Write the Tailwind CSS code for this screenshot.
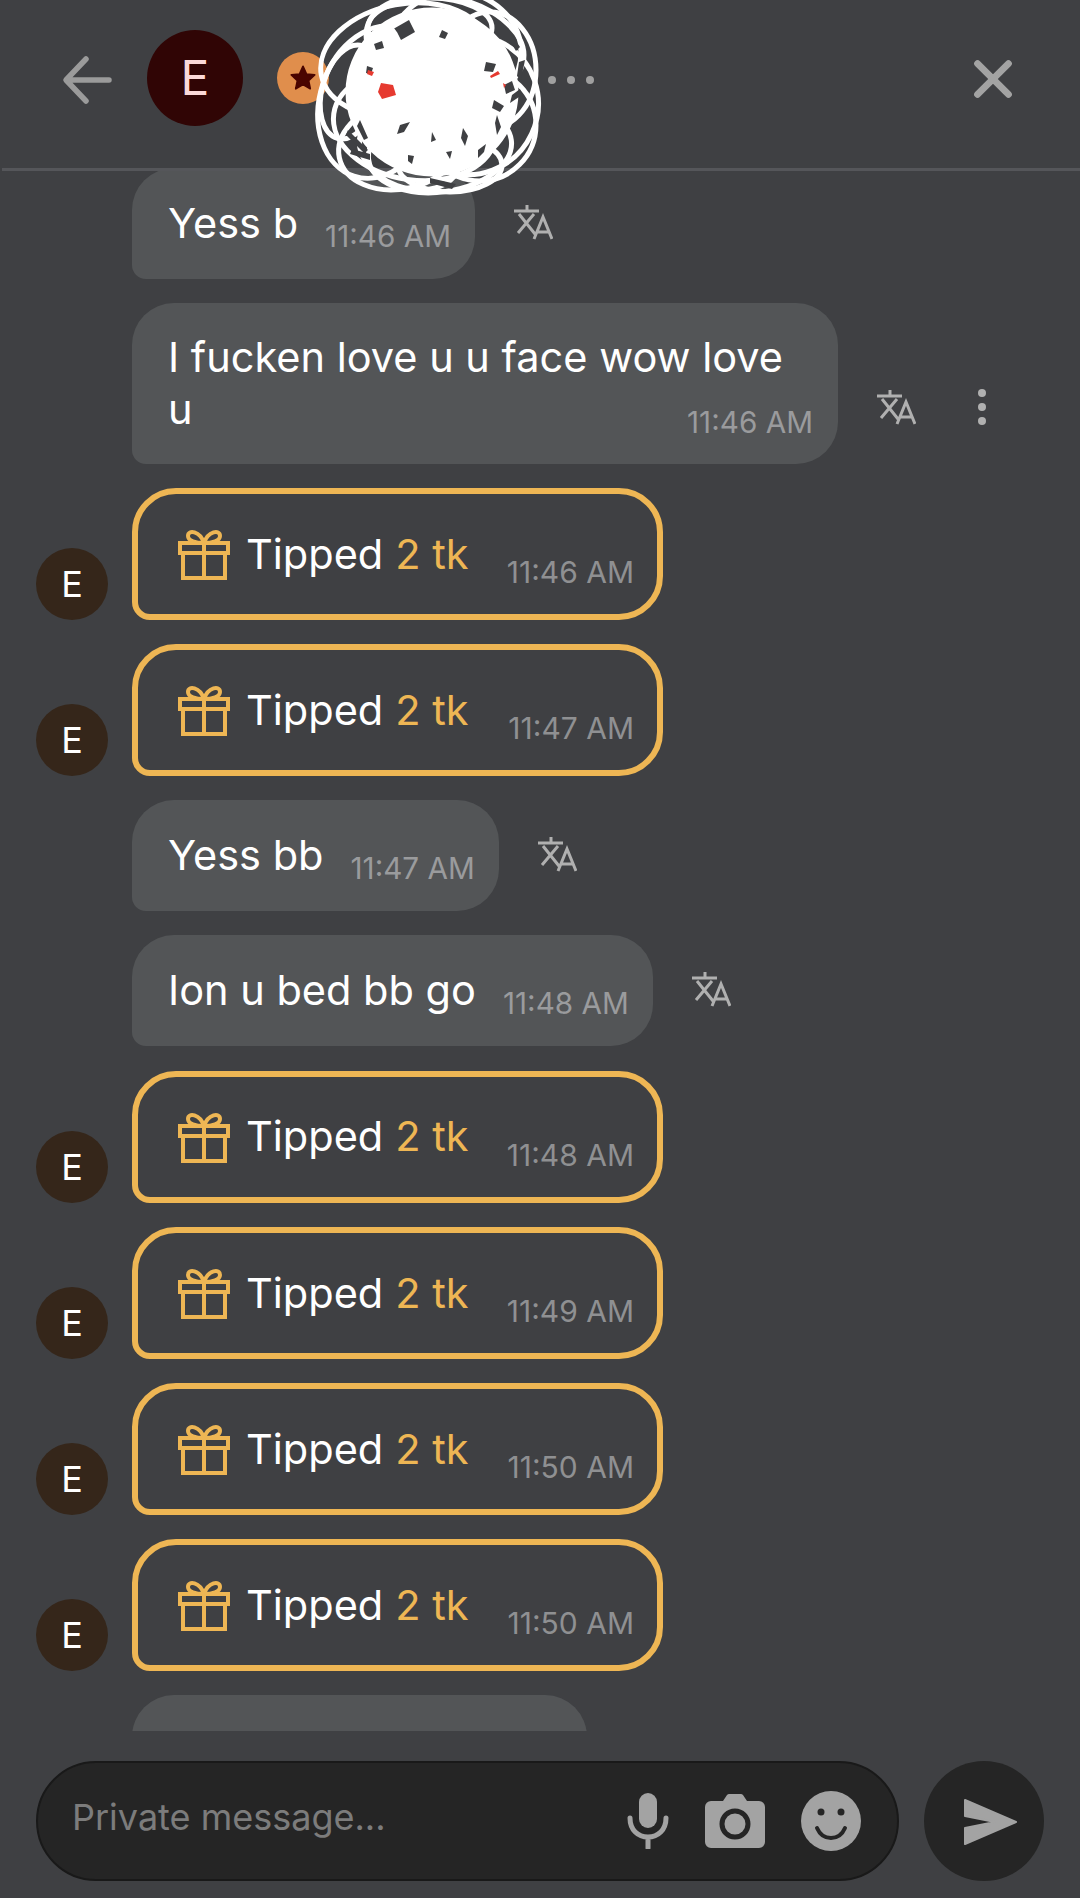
<!DOCTYPE html>
<html lang="en">
<head>
<meta charset="utf-8">
<script src="https://cdn.jsdelivr.net/npm/@tailwindcss/browser@4"></script>
<title>Chat</title>
</head>
<body class="bg-[#3f4043]">
<div class="relative w-[1080px] h-[1898px] overflow-hidden bg-[#3f4043] font-['Inter','Noto_Sans',sans-serif] flex flex-col">

  <!-- header -->
  <header class="h-[171px] shrink-0 ml-[2px] border-b-[3px] border-[#55565a] flex items-start pt-[30px]">
    <svg class="ml-[60px] mt-[25px] w-[50px] h-[50px] shrink-0" viewBox="0 0 50 50" fill="none" stroke="#9b9b9b" stroke-width="5.500" stroke-linecap="round" stroke-linejoin="round"><path d="M47 25H5M24 4 4 25l20 21"/></svg>
    <div class="ml-[35px] w-[96px] h-[96px] rounded-full bg-[#300505] text-[#fbd9d9] text-[48px] font-normal flex items-center justify-center shrink-0">E</div>
    <div class="ml-[34px] mt-[22px] w-[52px] h-[52px] rounded-full bg-[#e08e4c] flex items-center justify-center shrink-0">
      <svg class="w-[28px] h-[28px]" viewBox="0 0 24 24" fill="#4a0500" stroke="#4a0500" stroke-width="1.500" stroke-linejoin="round"><path d="m12 2 3 6.600 7 .8-5.200 4.800 1.400 7L12 17.600 5.800 21.200l1.400-7L2 9.400l7-.8z"/></svg>
    </div>
    <div class="ml-[219px] mt-[46px] flex gap-[11px]">
      <span class="w-[8px] h-[8px] rounded-full bg-[#a0a0a0]"></span>
      <span class="w-[8px] h-[8px] rounded-full bg-[#a0a0a0]"></span>
      <span class="w-[8px] h-[8px] rounded-full bg-[#a0a0a0]"></span>
    </div>
    <svg class="ml-[379px] mt-[29px] w-[40px] h-[40px]" viewBox="0 0 44 44" fill="none" stroke="#a3a3a3" stroke-width="7.500" stroke-linecap="round"><path d="m5 5 34 34M39 5 5 39"/></svg>
  </header>

  <!-- messages -->
  <main class="h-[1560px] shrink-0 overflow-hidden flex flex-col gap-[24.100px] pl-[36px] text-[41.500px] text-white">

    <div class="flex items-end pl-[96px] -mt-[3px]">
      <div class="h-[111px] rounded-[42px] rounded-bl-[14px] bg-[#535557] pl-[36px] pr-[24px] flex items-end pb-[30px]">
        <span class="leading-[52px]">Yess b</span>
        <span class="ml-[27px] -mb-[5px] text-[29.700px] leading-[36px] text-[#9a9b9d]">11:46 AM</span>
      </div>
      <svg class="ml-[38px] mb-[39px] w-[40px] h-[36px]" viewBox="0 0 40 36" fill="none" stroke="#b0b0b0" stroke-width="3"><path d="M1 7h25M14 1v6M6 10l16 20M21 10 5 29M21 35 30 13l9 22M24 28h12"/></svg>
    </div>

    <div class="flex items-end pl-[96px]">
      <div class="w-[706px] h-[161px] rounded-[42px] rounded-bl-[14px] bg-[#535557] pl-[36px] pr-[25px] pt-[28px] flex flex-col">
        <p class="leading-[52px]">I fucken love u u face wow love<br>u</p>
        <span class="self-end -mt-[31px] text-[29.700px] leading-[36px] text-[#9a9b9d]">11:46 AM</span>
      </div>
      <svg class="ml-[38px] mb-[39px] w-[40px] h-[36px] shrink-0" viewBox="0 0 40 36" fill="none" stroke="#b0b0b0" stroke-width="3"><path d="M1 7h25M14 1v6M6 10l16 20M21 10 5 29M21 35 30 13l9 22M24 28h12"/></svg>
      <div class="ml-[62px] mb-[39px] h-[36px] flex flex-col justify-between">
        <span class="w-[8px] h-[8px] rounded-full bg-[#b0b0b0]"></span>
        <span class="w-[8px] h-[8px] rounded-full bg-[#b0b0b0]"></span>
        <span class="w-[8px] h-[8px] rounded-full bg-[#b0b0b0]"></span>
      </div>
    </div>

    <div class="flex items-end">
      <div class="w-[72px] h-[72px] rounded-full bg-[#35261a] text-[36px] font-normal flex items-center justify-center shrink-0">E</div>
      <div class="ml-[24px] w-[531px] h-[132px] rounded-[44px] rounded-bl-[18px] border-[6px] border-[#eeb654] pl-[40px] flex items-center">
        <svg class="w-[52px] h-[52px] shrink-0" viewBox="0 0 52 52" fill="none" stroke="#eeb654" stroke-width="4"><path d="M2 15h48v10H2zM5 25v25h42V25M26 15v35M26 15c-4-12-16-14-16-7 0 5 8 7 16 7 8 0 16-2 16-7 0-7-12-5-16 7z"/></svg>
        <span class="ml-[16px]">Tipped</span><span class="ml-[12px] text-[#eeb654]">2 tk</span>
        <span class="ml-auto mr-[23px] mt-[36px] text-[30px] leading-[36px] text-[#8f9092]">11:46 AM</span>
      </div>
    </div>

    <div class="flex items-end">
      <div class="w-[72px] h-[72px] rounded-full bg-[#35261a] text-[36px] font-normal flex items-center justify-center shrink-0">E</div>
      <div class="ml-[24px] w-[531px] h-[132px] rounded-[44px] rounded-bl-[18px] border-[6px] border-[#eeb654] pl-[40px] flex items-center">
        <svg class="w-[52px] h-[52px] shrink-0" viewBox="0 0 52 52" fill="none" stroke="#eeb654" stroke-width="4"><path d="M2 15h48v10H2zM5 25v25h42V25M26 15v35M26 15c-4-12-16-14-16-7 0 5 8 7 16 7 8 0 16-2 16-7 0-7-12-5-16 7z"/></svg>
        <span class="ml-[16px]">Tipped</span><span class="ml-[12px] text-[#eeb654]">2 tk</span>
        <span class="ml-auto mr-[23px] mt-[36px] text-[30px] leading-[36px] text-[#8f9092]">11:47 AM</span>
      </div>
    </div>

    <div class="flex items-end pl-[96px]">
      <div class="h-[111px] rounded-[42px] rounded-bl-[14px] bg-[#535557] pl-[36px] pr-[24px] flex items-end pb-[30px]">
        <span class="leading-[52px]">Yess bb</span>
        <span class="ml-[27px] -mb-[5px] text-[29.700px] leading-[36px] text-[#9a9b9d]">11:47 AM</span>
      </div>
      <svg class="ml-[38px] mb-[39px] w-[40px] h-[36px]" viewBox="0 0 40 36" fill="none" stroke="#b0b0b0" stroke-width="3"><path d="M1 7h25M14 1v6M6 10l16 20M21 10 5 29M21 35 30 13l9 22M24 28h12"/></svg>
    </div>

    <div class="flex items-end pl-[96px]">
      <div class="h-[111px] rounded-[42px] rounded-bl-[14px] bg-[#535557] pl-[36px] pr-[24px] flex items-end pb-[30px]">
        <span class="leading-[52px]">Ion u bed bb go</span>
        <span class="ml-[27px] -mb-[5px] text-[29.700px] leading-[36px] text-[#9a9b9d]">11:48 AM</span>
      </div>
      <svg class="ml-[38px] mb-[39px] w-[40px] h-[36px]" viewBox="0 0 40 36" fill="none" stroke="#b0b0b0" stroke-width="3"><path d="M1 7h25M14 1v6M6 10l16 20M21 10 5 29M21 35 30 13l9 22M24 28h12"/></svg>
    </div>

    <div class="flex items-end">
      <div class="w-[72px] h-[72px] rounded-full bg-[#35261a] text-[36px] font-normal flex items-center justify-center shrink-0">E</div>
      <div class="ml-[24px] w-[531px] h-[132px] rounded-[44px] rounded-bl-[18px] border-[6px] border-[#eeb654] pl-[40px] flex items-center">
        <svg class="w-[52px] h-[52px] shrink-0" viewBox="0 0 52 52" fill="none" stroke="#eeb654" stroke-width="4"><path d="M2 15h48v10H2zM5 25v25h42V25M26 15v35M26 15c-4-12-16-14-16-7 0 5 8 7 16 7 8 0 16-2 16-7 0-7-12-5-16 7z"/></svg>
        <span class="ml-[16px]">Tipped</span><span class="ml-[12px] text-[#eeb654]">2 tk</span>
        <span class="ml-auto mr-[23px] mt-[36px] text-[30px] leading-[36px] text-[#8f9092]">11:48 AM</span>
      </div>
    </div>

    <div class="flex items-end">
      <div class="w-[72px] h-[72px] rounded-full bg-[#35261a] text-[36px] font-normal flex items-center justify-center shrink-0">E</div>
      <div class="ml-[24px] w-[531px] h-[132px] rounded-[44px] rounded-bl-[18px] border-[6px] border-[#eeb654] pl-[40px] flex items-center">
        <svg class="w-[52px] h-[52px] shrink-0" viewBox="0 0 52 52" fill="none" stroke="#eeb654" stroke-width="4"><path d="M2 15h48v10H2zM5 25v25h42V25M26 15v35M26 15c-4-12-16-14-16-7 0 5 8 7 16 7 8 0 16-2 16-7 0-7-12-5-16 7z"/></svg>
        <span class="ml-[16px]">Tipped</span><span class="ml-[12px] text-[#eeb654]">2 tk</span>
        <span class="ml-auto mr-[23px] mt-[36px] text-[30px] leading-[36px] text-[#8f9092]">11:49 AM</span>
      </div>
    </div>

    <div class="flex items-end">
      <div class="w-[72px] h-[72px] rounded-full bg-[#35261a] text-[36px] font-normal flex items-center justify-center shrink-0">E</div>
      <div class="ml-[24px] w-[531px] h-[132px] rounded-[44px] rounded-bl-[18px] border-[6px] border-[#eeb654] pl-[40px] flex items-center">
        <svg class="w-[52px] h-[52px] shrink-0" viewBox="0 0 52 52" fill="none" stroke="#eeb654" stroke-width="4"><path d="M2 15h48v10H2zM5 25v25h42V25M26 15v35M26 15c-4-12-16-14-16-7 0 5 8 7 16 7 8 0 16-2 16-7 0-7-12-5-16 7z"/></svg>
        <span class="ml-[16px]">Tipped</span><span class="ml-[12px] text-[#eeb654]">2 tk</span>
        <span class="ml-auto mr-[23px] mt-[36px] text-[30px] leading-[36px] text-[#8f9092]">11:50 AM</span>
      </div>
    </div>

    <div class="flex items-end">
      <div class="w-[72px] h-[72px] rounded-full bg-[#35261a] text-[36px] font-normal flex items-center justify-center shrink-0">E</div>
      <div class="ml-[24px] w-[531px] h-[132px] rounded-[44px] rounded-bl-[18px] border-[6px] border-[#eeb654] pl-[40px] flex items-center">
        <svg class="w-[52px] h-[52px] shrink-0" viewBox="0 0 52 52" fill="none" stroke="#eeb654" stroke-width="4"><path d="M2 15h48v10H2zM5 25v25h42V25M26 15v35M26 15c-4-12-16-14-16-7 0 5 8 7 16 7 8 0 16-2 16-7 0-7-12-5-16 7z"/></svg>
        <span class="ml-[16px]">Tipped</span><span class="ml-[12px] text-[#eeb654]">2 tk</span>
        <span class="ml-auto mr-[23px] mt-[36px] text-[30px] leading-[36px] text-[#8f9092]">11:50 AM</span>
      </div>
    </div>

    <div class="pl-[96px]">
      <div class="w-[455px] h-[111px] rounded-[42px] bg-[#535557]"></div>
    </div>
  </main>

  <!-- composer -->
  <footer class="flex-1 pl-[36px] pt-[30px] flex items-start gap-[25px]">
    <div class="w-[863px] h-[120px] rounded-full bg-[#252525] border-2 border-[#191919] flex items-center pl-[34px]">
      <span class="pb-[8px] text-[36px] text-[#7c7c7c]">Private message...</span>
      <svg class="ml-auto w-[42px] h-[56px]" viewBox="0 0 42 56" fill="none"><rect x="12" y="0" width="18" height="35" rx="9" fill="#a3a3a3"/><path d="M3 25c0 12 8 19 18 19s18-7 18-19M21 44v11" stroke="#a3a3a3" stroke-width="5" stroke-linecap="round"/></svg>
      <svg class="ml-[36px] w-[60px] h-[54px]" viewBox="0 0 60 54"><path fill="#a3a3a3" fill-rule="evenodd" d="M6 7h12l4-6q1-1 2-1h12q1 0 2 1l4 6h12a6 6 0 0 1 6 6v35a6 6 0 0 1-6 6H6a6 6 0 0 1-6-6V13a6 6 0 0 1 6-6zm24 7.500a15.500 15.500 0 1 0 0 31 15.500 15.500 0 0 0 0-31zm0 5a10.500 10.500 0 1 1 0 21 10.500 10.500 0 0 1 0-21z"/></svg>
      <svg class="ml-[36px] mr-[36px] w-[60px] h-[60px]" viewBox="0 0 60 60"><circle cx="30" cy="30" r="30" fill="#a3a3a3"/><circle cx="20" cy="21" r="3.500" fill="#252525"/><circle cx="40" cy="21" r="3.500" fill="#252525"/><path d="M16 37c3 7 8 10 14 10s11-3 14-10" fill="none" stroke="#252525" stroke-width="4" stroke-linecap="round"/></svg>
    </div>
    <div class="w-[120px] h-[120px] rounded-full bg-[#252525] flex items-center justify-center">
      <svg class="w-[54px] h-[46px] ml-[14px] mt-[2px]" viewBox="0 0 54 46"><path fill="#a3a3a3" stroke="#a3a3a3" stroke-width="2" stroke-linejoin="round" d="M1 1 52 23 1 45V29l30-6-30-6z"/></svg>
    </div>
  </footer>

  <!-- scribble laid over the header -->
  <svg class="absolute left-0 top-0 w-[1080px] h-[210px] pointer-events-none" viewBox="0 0 1080 210" fill="none" stroke="#fff" stroke-width="5">
    <ellipse cx="432" cy="92" rx="84" ry="82" fill="#fff"/>
    <ellipse cx="378" cy="102" rx="58" ry="78" transform="rotate(18 378 102)"/>
    <ellipse cx="405" cy="60" rx="85" ry="56" transform="rotate(-10 405 60)"/>
    <ellipse cx="455" cy="52" rx="66" ry="60"/>
    <ellipse cx="445" cy="45" rx="80" ry="48" transform="rotate(12 445 45)"/>
    <ellipse cx="490" cy="70" rx="46" ry="58"/>
    <ellipse cx="470" cy="105" rx="68" ry="70" transform="rotate(25 470 105)"/>
    <ellipse cx="480" cy="125" rx="56" ry="56"/>
    <ellipse cx="415" cy="125" rx="82" ry="55" transform="rotate(8 415 125)"/>
    <ellipse cx="400" cy="145" rx="62" ry="44" transform="rotate(-12 400 145)"/>
    <ellipse cx="440" cy="150" rx="72" ry="42" transform="rotate(-8 440 150)"/>
    <ellipse cx="450" cy="165" rx="52" ry="27"/>
    <ellipse cx="410" cy="150" rx="52" ry="38" transform="rotate(20 410 150)"/>
    <ellipse cx="430" cy="28" rx="62" ry="30"/>
    <ellipse cx="350" cy="92" rx="28" ry="48" transform="rotate(15 350 92)"/>
    <g fill="#3f4043" stroke="none">
      <path d="M395 28l14-8 6 12-14 8zM374 44l8-3 2 7-8 2zM442 30l6 3-3 6-6-2zM486 62l10 2-3 8-9-1zM504 85l8-4 3 9-9 4zM494 100l10 6-4 6-8-4zM367 66l6 2-2 6-5-1zM400 125l10-3-6 10-7 2zM463 128l5 8-3 10-4-8zM497 115l4 12-4 8-2-12zM432 132l4 8-5 2zM408 155l6 1-2 8-4-3zM446 152l6-1-2 8zM478 150l8-6-2 8-6 6zM360 120l8 18-4 2-7-14zM348 130l20 20-4 3-18-18zM370 160l-20-6 2-5 18 5zM512 35l8 12-4 4-6-10zM525 60l-4 20-4-4 2-14zM522 95l-12 8 2-8 8-6zM430 178l26 6-4 5-22-6zM394 28l8 2-3 5z"/>
      <path fill="#e63a30" d="M381 83l12 2 3 10-14 4-4-7z"/>
      <path fill="#e63a30" d="M368 70l6 2-2 4-5-2zM490 76l8-5 2 3-9 4zM503 83l3 2-2 3z"/>
    </g>
  </svg>
</div>
</body>
</html>
